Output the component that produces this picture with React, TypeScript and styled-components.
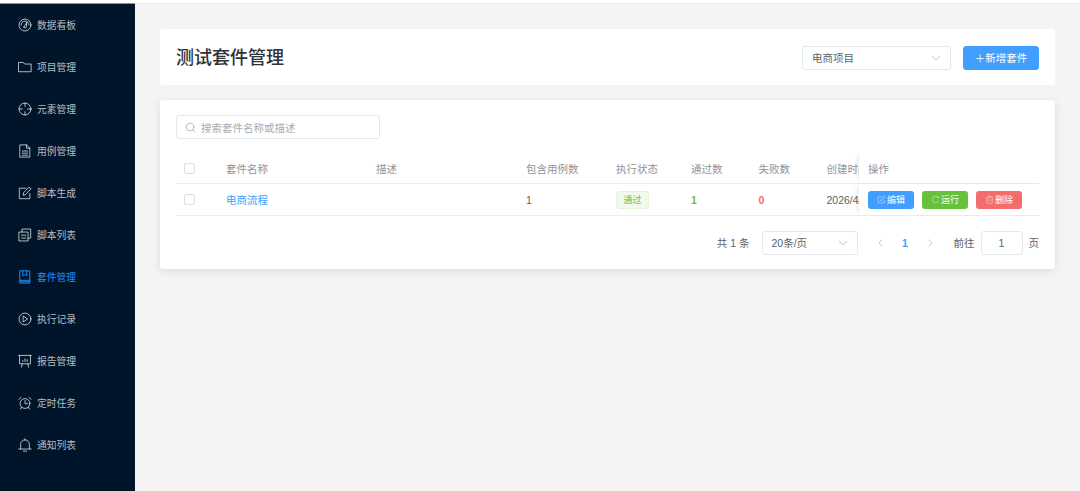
import React from "react";
import styled, { createGlobalStyle } from "styled-components";

const Global = createGlobalStyle`
  html, body { margin: 0; padding: 0; background: #fff; }
  body { font-family: "Liberation Sans", "Noto Sans CJK SC", sans-serif; }
  * { box-sizing: border-box; }
`;

const Page = styled.div`
  width: 1080px; height: 491px; padding-top: 3px; display: flex; overflow: hidden; background: #fff;
`;
const Sidebar = styled.nav`
  width: 135px; flex: none; background: #001529; display: flex; flex-direction: column;
  border-top: 1px solid #8a9099;
`;
const MenuItem = styled.div<{ $active?: boolean }>`
  height: 42px; display: flex; align-items: center; gap: 5px; padding-left: 18px;
  font-size: 9.75px; color: ${(p) => (p.$active ? "#1890ff" : "rgba(255,255,255,0.72)")};
`;
const MenuIcon = styled.svg`
  width: 14px; height: 14px; flex: none; fill: none; stroke: currentColor; stroke-width: 1.1;
  stroke-linecap: round; stroke-linejoin: round;
`;
const Main = styled.main`
  flex: 1; background: #f4f4f4; padding: 25px 25px 0; display: flex; flex-direction: column; gap: 15px;
  border-top: 1px solid #ebebeb;
`;
const HeaderCard = styled.header`
  height: 56px; background: #fff; border-radius: 3px; padding: 1px 16px 0 16px;
  display: flex; align-items: center; justify-content: space-between;
`;
const Title = styled.h1`
  margin: 0; font-size: 18px; font-weight: 500; color: #303133; line-height: 1;
`;
const HeaderActions = styled.div`
  display: flex; align-items: center; gap: 12px;
`;
const SelectBox = styled.div<{ $w: number }>`
  width: ${(p) => p.$w}px; height: 24px; border: 1px solid #e4e7ed; border-radius: 3px; background: #fff;
  display: flex; align-items: center; justify-content: space-between; padding: 0 9px;
  font-size: 10.5px; color: #606266;
`;
const Chevron = styled.svg`
  width: 10px; height: 10px; fill: none; stroke: #b4b7bd; stroke-width: 0.8;
`;
const PrimaryButton = styled.button`
  width: 76px; height: 24px; border: 1px solid #409eff; background: #409eff; color: #fff; border-radius: 3px;
  font: inherit; font-size: 10.5px; padding: 0; display: flex; align-items: center; justify-content: center;
`;
const ListCard = styled.section`
  height: 169px; background: #fff; border-radius: 3px; padding: 15px 15px 15px 16px;
  box-shadow: 0 2px 9px rgba(0, 0, 0, 0.1);
`;
const SearchBox = styled.div`
  width: 204px; height: 24px; border: 1px solid #e4e7ed; border-radius: 3px; display: flex; align-items: center;
  gap: 5px; padding: 0 8px; font-size: 10.5px; color: #a8abb2;
`;
const SearchIcon = styled.svg`
  width: 11px; height: 11px; fill: none; stroke: #a8abb2; stroke-width: 0.9; stroke-linecap: round; flex: none;
`;
const Table = styled.div`
  margin-top: 14px; position: relative; width: 864px; overflow: hidden;
`;
const cols = "41px 150px 150px 90px 75px 67.5px 68px 41.5px 181px";
const Row = styled.div<{ $head?: boolean }>`
  display: grid; grid-template-columns: ${cols}; align-items: center;
  height: ${(p) => (p.$head ? "31px" : "32px")}; border-bottom: 1px solid #ebeef5;
  font-size: 10.5px; color: ${(p) => (p.$head ? "#909399" : "#606266")};
`;
const Cell = styled.div`
  padding-left: 9px; white-space: nowrap; overflow: hidden;
`;
const CheckCell = styled.div`
  padding-left: 8px; display: flex;
`;
const Checkbox = styled.span`
  width: 11px; height: 11px; border: 1px solid #dcdfe6; border-radius: 2px; background: #fff; display: block;
`;
const NameLink = styled.span`
  color: #409eff;
`;
const Tag = styled.span`
  display: inline-flex; height: 18px; width: 33px; align-items: center; justify-content: center;
  border: 1px solid #e1f3d8; background: #f0f9eb; color: #67c23a; font-size: 9px; border-radius: 3px;
`;
const Count = styled.span<{ $color: string }>`
  font-weight: 700; color: ${(p) => p.$color};
`;
const FixedCell = styled.div`
  height: 100%; display: flex; align-items: center; gap: 8px; padding-left: 9px; background: #fff;
  box-shadow: -3px 0 5px -2px rgba(0, 0, 0, 0.1); position: relative; z-index: 1;
`;
const ActionButton = styled.button<{ $bg: string }>`
  width: 46px; height: 18px; border: 1px solid ${(p) => p.$bg}; background: ${(p) => p.$bg}; color: #fff;
  border-radius: 2.5px; padding: 0; font: inherit; font-size: 9px;
  display: flex; align-items: center; justify-content: center; gap: 1px;
`;
const ActionIcon = styled.svg`
  width: 9px; height: 9px; fill: none; stroke: #fff; stroke-width: 0.8; flex: none; opacity: .9;
`;
const Pagination = styled.div`
  margin-top: 14px; display: flex; align-items: center; justify-content: flex-end; width: 863px;
  font-size: 10.5px; color: #606266; height: 25px;
`;
const Total = styled.span`
  margin-right: 12px;
`;
const PageNav = styled.div`
  display: flex; align-items: center; gap: 15px; margin: 0 19px 0 18px;
`;
const PageNum = styled.span`
  color: #409eff; font-weight: 700; width: 9px; text-align: center;
`;
const JumpInput = styled.div`
  width: 42px; height: 24px; border: 1px solid #e4e7ed; border-radius: 3px; margin: 0 6px;
  display: flex; align-items: center; justify-content: center;
`;

const P = (d: string) => <path d={d} />;
const icons: Record<string, React.ReactNode> = {
  gauge: <><circle cx="8" cy="8" r="6.8" />{P("M3.6 8A4.4 4.4 0 0 1 8 3.6a4.4 4.4 0 0 1 4.4 4.4M6.8 10.4 10 4.8 9.4 10.8a1.5 1.5 0 0 1-2.6-.4z")}</>,
  folder: P("M1 2.8h5l1.5 1.8h7.5v8.8H1z"),
  aim: <><circle cx="8" cy="8" r="6.8" />{P("M8 1.2v3.8M8 11v3.8M1.2 8H5M11 8h3.8")}</>,
  doc: P("M2.5 1h7.2l3.8 3.8V15h-11zM9.7 1v3.8h3.8M5 8h6M5 10.4h6M5 12.8h6"),
  edit: P("M13.5 8.5V14.5H1.5V2.5h7.5M6 10.2l.4-2.6L12.8 1.2l2 2-6.2 6.6z"),
  copy: P("M1.5 4.6h10v10.2h-10zM4.5 4.6V1.2h10v10.4h-3M4 8.2h5M4 11.4h5"),
  book: P("M2.5 1h11v14h-11zM2.5 11.8h11M5.5 1v5.6l2.2-1.4L10 6.6V1M2.5 13.4h11"),
  play: <><circle cx="8" cy="8" r="6.8" />{P("M6.2 4.8 11 8l-4.8 3.2z")}</>,
  board: P("M.8 1.6h14.4M1.8 1.6v9.6h12.4V1.6M4.8 11.2 4 15M11.2 11.2 12 15M5.5 8.6V7.4M8 8.6V5.6M10.5 8.6V6.6"),
  alarm: <><circle cx="8" cy="8.6" r="5.6" />{P("M8 5.2v3.6h2.8M1 4 3.6 1.4M15 4l-2.6-2.6M4 13l-1.2 2M12 13l1.2 2")}</>,
  bell: P("M8 1v1.2M3 12.6V7.2a5 5 0 0 1 10 0v5.4M.8 12.6h14.4M6.2 15h3.6"),
};

const menu: [string, string][] = [
  ["gauge", "数据看板"], ["folder", "项目管理"], ["aim", "元素管理"], ["doc", "用例管理"],
  ["edit", "脚本生成"], ["copy", "脚本列表"], ["book", "套件管理"], ["play", "执行记录"],
  ["board", "报告管理"], ["alarm", "定时任务"], ["bell", "通知列表"],
];

const Down = () => <Chevron viewBox="0 0 10 10"><path d="M1 3l4 4 4-4" /></Chevron>;

export default function App() {
  return (
    <Page>
      <Global />
      <Sidebar>
        {menu.map(([icon, label]) => (
          <MenuItem key={label} $active={label === "套件管理"}>
            <MenuIcon viewBox="0 0 16 16">{icons[icon]}</MenuIcon>
            {label}
          </MenuItem>
        ))}
      </Sidebar>
      <Main>
        <HeaderCard>
          <Title>测试套件管理</Title>
          <HeaderActions>
            <SelectBox $w={149}>电商项目<Down /></SelectBox>
            <PrimaryButton>＋新增套件</PrimaryButton>
          </HeaderActions>
        </HeaderCard>
        <ListCard>
          <SearchBox>
            <SearchIcon viewBox="0 0 12 12"><circle cx="5.5" cy="5.5" r="4.2" /><path d="M8.6 8.6 10.6 10.6" /></SearchIcon>
            搜索套件名称或描述
          </SearchBox>
          <Table>
            <Row $head>
              <CheckCell><Checkbox /></CheckCell>
              <Cell>套件名称</Cell><Cell>描述</Cell><Cell>包含用例数</Cell><Cell>执行状态</Cell>
              <Cell>通过数</Cell><Cell>失败数</Cell><Cell>创建时间</Cell>
              <FixedCell>操作</FixedCell>
            </Row>
            <Row>
              <CheckCell><Checkbox /></CheckCell>
              <Cell><NameLink>电商流程</NameLink></Cell><Cell /><Cell>1</Cell>
              <Cell><Tag>通过</Tag></Cell>
              <Cell><Count $color="#67c23a">1</Count></Cell>
              <Cell><Count $color="#f56c6c">0</Count></Cell>
              <Cell>2026/4/1</Cell>
              <FixedCell>
                <ActionButton $bg="#409eff"><ActionIcon viewBox="0 0 16 16"><path d="M13 8.5V14H2V3h6M6.2 10l.4-2.4 6.2-6 1.8 1.8-6.1 6.2z" /></ActionIcon>编辑</ActionButton>
                <ActionButton $bg="#67c23a"><ActionIcon viewBox="0 0 16 16"><path d="M13.5 5A6 6 0 1 0 14 9.5M13.5 2v3h-3" /></ActionIcon>运行</ActionButton>
                <ActionButton $bg="#f56c6c"><ActionIcon viewBox="0 0 16 16"><path d="M1.5 4h13M6 4V1.8h4V4M3 4v10.5h10V4M6.5 7v4.5M9.5 7v4.5" /></ActionIcon>删除</ActionButton>
              </FixedCell>
            </Row>
          </Table>
          <Pagination>
            <Total>共 1 条</Total>
            <SelectBox $w={96}>20条/页<Down /></SelectBox>
            <PageNav>
              <Chevron viewBox="0 0 10 10"><path d="M6.5 1.5 3 5l3.5 3.5" /></Chevron>
              <PageNum>1</PageNum>
              <Chevron viewBox="0 0 10 10"><path d="M3.5 1.5 7 5 3.5 8.5" /></Chevron>
            </PageNav>
            前往
            <JumpInput>1</JumpInput>
            页
          </Pagination>
        </ListCard>
      </Main>
    </Page>
  );
}
